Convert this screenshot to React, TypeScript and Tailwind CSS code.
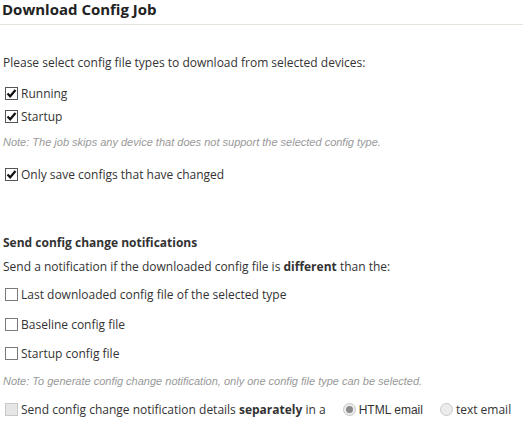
import React from "react";

const Check = ({ checked = false, disabled = false }: { checked?: boolean; disabled?: boolean }) => (
  <span
    className={`inline-flex items-center justify-center w-[13px] h-[13px] border ${
      disabled ? "border-[#c8c8c8] bg-[#e6e6e6]" : checked ? "border-[#555] bg-white" : "border-[#7a7a7a] bg-white"
    } shrink-0`}
  >
    {checked && (
      <svg width="11" height="11" viewBox="0 0 11 11">
        <path d="M1.5 5.5 L4.2 8.3 L9.5 2" stroke="#111" strokeWidth="2.2" fill="none" />
      </svg>
    )}
  </span>
);

const Radio = ({ checked = false }: { checked?: boolean }) => (
  <span className="inline-flex items-center justify-center w-[13px] h-[13px] rounded-full border border-[#c8c8c8] bg-[#ececec] shrink-0">
    {checked && <span className="w-[7px] h-[7px] rounded-full bg-[#8a8a8a]" />}
  </span>
);

const Row = ({ children, className = "" }: { children: React.ReactNode; className?: string }) => (
  <div className={`flex items-center gap-[3px] pl-[5px] h-[17px] ${className}`}>{children}</div>
);

const noteFont = { fontFamily: '"Liberation Sans", Arial, sans-serif' };

export default function App() {
  return (
    <div
      className="w-[523px] h-[424px] bg-white text-[#333] text-[12px] overflow-hidden"
      style={{ fontFamily: '"Open Sans", sans-serif' }}
    >
      <div className="pl-[2px] h-[25px] border-b border-[#e4e4dc] text-[15px] font-bold text-[#222] leading-[18px]">
        Download Config Job
      </div>
      <div className="pl-[3px] mt-[29px] leading-[17px]">
        Please select config file types to download from selected devices:
      </div>
      <Row className="mt-[14px]">
        <Check checked />
        Running
      </Row>
      <Row className="mt-[6px]">
        <Check checked />
        Startup
      </Row>
      <div className="pl-[3px] mt-[10px] text-[11px] italic text-[#999] leading-[14px]" style={noteFont}>
        Note: The job skips any device that does not support the selected config type.
      </div>
      <Row className="mt-[17px]">
        <Check checked />
        Only save configs that have changed
      </Row>
      <div className="pl-[3px] mt-[51px] font-bold leading-[17px]">Send config change notifications</div>
      <div className="pl-[3px] mt-[7px] leading-[17px]">
        Send a notification if the downloaded config file is <b>different</b> than the:
      </div>
      <Row className="mt-[11px]">
        <Check />
        Last downloaded config file of the selected type
      </Row>
      <Row className="mt-[13px]">
        <Check />
        Baseline config file
      </Row>
      <Row className="mt-[12px]">
        <Check />
        Startup config file
      </Row>
      <div className="pl-[3px] mt-[12px] text-[11px] italic text-[#999] leading-[14px]" style={noteFont}>
        Note: To generate config change notification, only one config file type can be selected.
      </div>
      <Row className="mt-[13px]">
        <Check disabled />
        <span>
          Send config change notification details <b>separately</b> in a
        </span>
        <span className="ml-[14px] inline-flex items-center gap-[3px]">
          <Radio checked />
          <span style={noteFont}>HTML email</span>
        </span>
        <span className="ml-[14px] inline-flex items-center gap-[3px]">
          <Radio />
          <span>text email</span>
        </span>
      </Row>
    </div>
  );
}
